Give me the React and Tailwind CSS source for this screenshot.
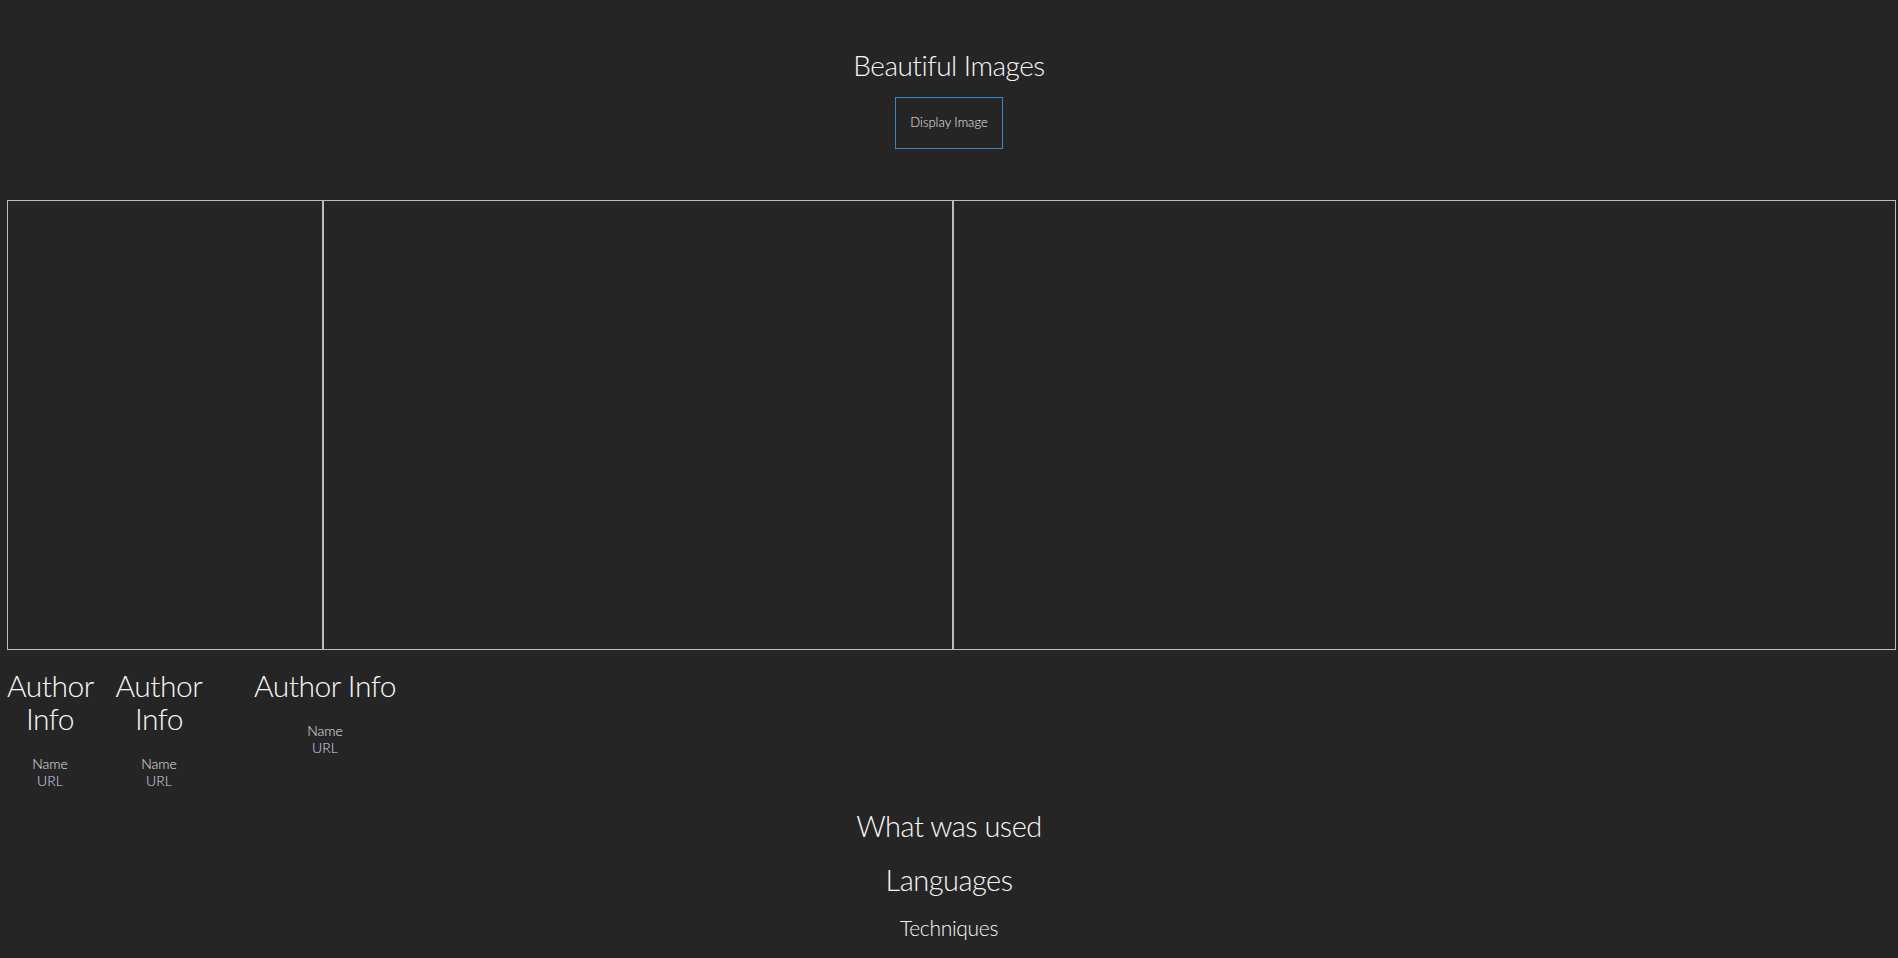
import React from 'react';

const authors = [
  { width: 'w-[86px]' },
  { width: 'w-[132px]' },
  { width: 'w-[200px]' },
];

const App = () => {
  return (
    <div className="min-h-screen bg-[#252525] text-[#f7f7f7] font-['Lato','Liberation_Sans',sans-serif] font-light">
      <header className="flex flex-col items-center pt-[47px]">
        <h1 className="text-[28px] leading-[36px] tracking-[-0.5px]">Beautiful Images</h1>
        <button
          type="button"
          className="mt-[14px] w-[108px] h-[52px] border border-[#3f86c0] text-[13px] text-[#ececec]"
        >
          Display Image
        </button>
      </header>

      <div className="mt-[51px] ml-[7px] flex w-[1889px] h-[450px]">
        <div className="flex-[1] border border-[#bdbdbd]" />
        <div className="flex-[2] border border-[#bdbdbd]" />
        <div className="flex-[3] border border-[#bdbdbd]" />
      </div>

      <div className="ml-[7px] mt-[19px] flex items-start">
        {authors.map((a, i) => (
          <div key={i} className={`${a.width} flex flex-col items-center text-center`}>
            <h2 className="text-[30px] leading-[33px] tracking-[-0.5px]">Author Info</h2>
            <p className="mt-[20px] text-[14px] leading-[17px] text-[#e6e6e6]">Name</p>
            <a className="text-[14px] leading-[17px] text-[#d4dcf2]">URL</a>
          </div>
        ))}
      </div>

      <section className="flex flex-col items-center mt-[17px]">
        <h2 className="text-[29px] leading-[40px] tracking-[-0.5px]">What was used</h2>
        <h3 className="mt-[14px] text-[29px] leading-[40px] tracking-[-0.5px]">Languages</h3>
        <h4 className="mt-[15px] text-[21px] leading-[26px] tracking-[-0.3px]">Techniques</h4>
      </section>
    </div>
  );
};

export default App;
